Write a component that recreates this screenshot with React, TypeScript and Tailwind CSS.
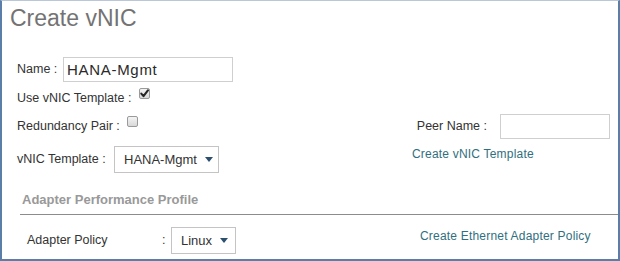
import { useState } from "react";

function Checkbox({ checked, onChange }: { checked: boolean; onChange: () => void }) {
  return (
    <button
      type="button"
      onClick={onChange}
      className="w-[11px] h-[11px] rounded-[2px] border border-[#9a9a9a] bg-gradient-to-b from-[#f4f4f4] to-[#d9d9d9] flex items-center justify-center p-0"
    >
      {checked && (
        <svg width="9" height="9" viewBox="0 0 9 9">
          <path d="M1.3 4.6 L3.5 7.1 L7.9 1.3" fill="none" stroke="#262626" strokeWidth="2.1" strokeLinecap="round" strokeLinejoin="round" />
        </svg>
      )}
    </button>
  );
}

function Caret() {
  return (
    <svg width="8" height="5" viewBox="0 0 8 5" className="shrink-0">
      <path d="M0 0 H8 L4 5 Z" fill="#2c4f6e" />
    </svg>
  );
}

function FakeSelect({ value, className }: { value: string; className: string }) {
  return (
    <div className={`h-[27px] border border-[#c4c4c4] bg-white flex items-center pl-[9px] pr-[7px] gap-[8px] text-[13px] text-[#333] whitespace-nowrap ${className}`}>
      <span>{value}</span>
      <Caret />
    </div>
  );
}

export default function App() {
  const [name, setName] = useState("HANA-Mgmt");
  const [useTemplate, setUseTemplate] = useState(true);
  const [redundancy, setRedundancy] = useState(false);
  const [peerName, setPeerName] = useState("");

  return (
    <div
      className="w-[620px] h-[261px] overflow-hidden bg-white border-l-2 border-r-2 border-b-2 border-[#5b7ea8] border-t border-t-[#b9c7d8] flex flex-col text-[12.5px] text-[#333] whitespace-nowrap"
      style={{ fontFamily: '"Liberation Sans", Arial, sans-serif' }}
    >
      <div className="mt-[6px] pl-[8px] h-[23px] leading-[23px] text-[23px] text-[#737373]">Create vNIC</div>

      <div className="mt-[27px] pl-[15px] flex items-center h-[25px]">
        <span className="w-[46px]">Name :</span>
        <input
          value={name}
          onChange={(e) => setName(e.target.value)}
          className="w-[170px] h-[25px] border border-[#cfcfcf] pl-[3px] text-[15px] tracking-[0.7px] text-[#2a2a2a] outline-none"
        />
      </div>

      <div className="mt-[6px] pl-[15px] flex items-start h-[20px]">
        <span className="w-[122px] leading-[20px]">Use vNIC Template :</span>
        <Checkbox checked={useTemplate} onChange={() => setUseTemplate(!useTemplate)} />
      </div>

      <div className="mt-[6px] pl-[15px] pr-[8px] flex items-start justify-between h-[25px]">
        <div className="flex items-start mt-[2px]">
          <span className="w-[110px] leading-[20px]">Redundancy Pair :</span>
          <Checkbox checked={redundancy} onChange={() => setRedundancy(!redundancy)} />
        </div>
        <div className="flex items-center gap-[13px]">
          <span>Peer Name :</span>
          <input
            value={peerName}
            onChange={(e) => setPeerName(e.target.value)}
            className="w-[110px] h-[25px] border border-[#cfcfcf] pl-[3px] text-[13px] outline-none"
          />
        </div>
      </div>

      <div className="mt-[7px] pl-[15px] flex items-start h-[27px]">
        <div className="flex items-center w-[395px]">
          <span className="w-[97px]">vNIC Template :</span>
          <FakeSelect value="HANA-Mgmt" className="w-[105px]" />
        </div>
        <a className="text-[12px] leading-[16px] tracking-[0.2px] text-[#2f6f80] cursor-pointer">Create vNIC Template</a>
      </div>

      <div className="mt-[17px] pl-[20px] h-[20px] leading-[20px] text-[13px] font-bold text-[#999]">Adapter Performance Profile</div>
      <div className="mt-[4px] ml-[18px] h-px bg-[#8c8c8c]" />

      <div className="mt-[12px] pl-[25px] flex items-start h-[27px]">
        <div className="flex items-center w-[393px]">
          <span className="w-[135px]">Adapter Policy</span>
          <span className="w-[9px]">:</span>
          <FakeSelect value="Linux" className="w-[65px]" />
        </div>
        <a className="mt-[1px] text-[12px] leading-[16px] tracking-[0.2px] text-[#2f6f80] cursor-pointer">Create Ethernet Adapter Policy</a>
      </div>
    </div>
  );
}
